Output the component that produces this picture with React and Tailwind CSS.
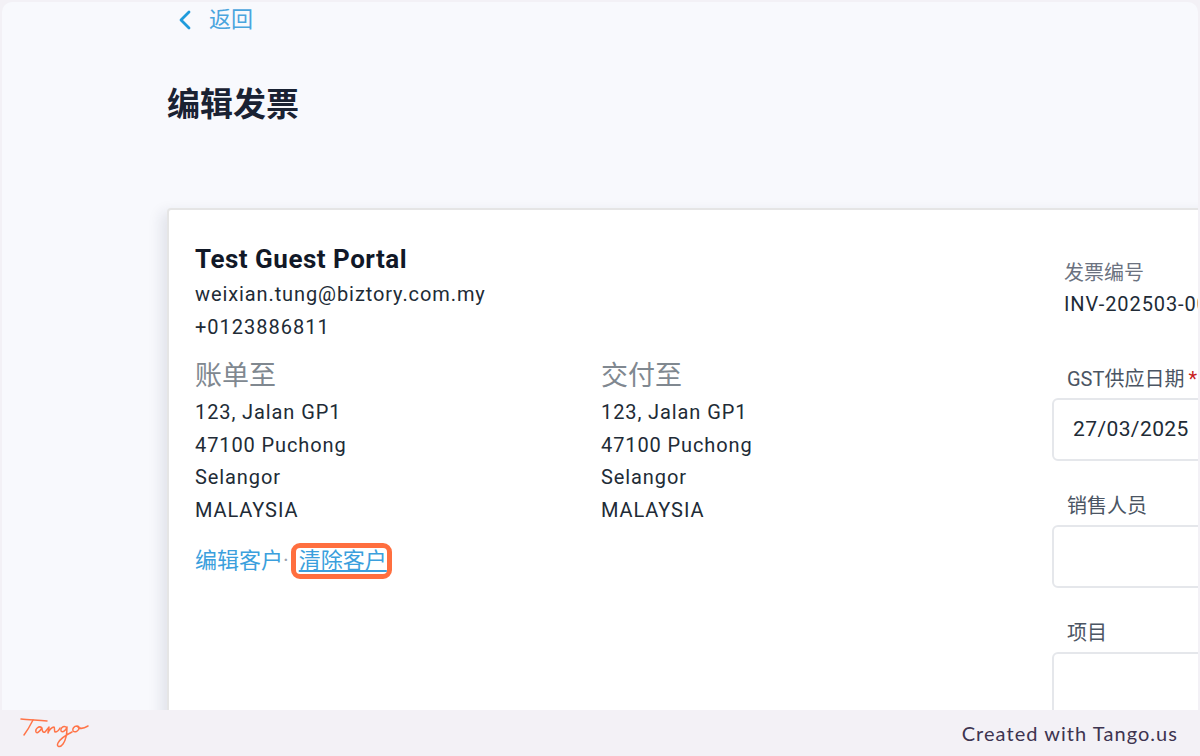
import React from "react";

const font = { fontFamily: "Roboto, 'Noto Sans CJK SC', sans-serif" };

const Address = ({ title }) => (
  <div className="w-[406px]">
    <div className="text-[27px] leading-[36px] text-[#808890]">{title}</div>
    <div className="mt-[2px] text-[20px] leading-[32.7px] tracking-[0.9px] text-[#212b36]">
      <div>123, Jalan GP1</div>
      <div>47100 Puchong</div>
      <div>Selangor</div>
      <div>MALAYSIA</div>
    </div>
  </div>
);

const Field = ({ label, required, value, className }) => (
  <div className={className}>
    <div className="pl-[15px] text-[20px] leading-[28px] text-[#4b5563] whitespace-nowrap">
      {label}
      {required && <span className="ml-[4px] text-[#c81e1e]">*</span>}
    </div>
    <div className="mt-[5px] flex h-[63px] w-[200px] items-center rounded-[6px] border-2 border-[#e5e7eb] bg-white pl-[19px] text-[21px] tracking-[0.4px] text-[#212b36]">
      {value}
    </div>
  </div>
);

const TangoLogo = () => (
  <svg width="70" height="34" viewBox="0 0 70 34" fill="none" stroke="#ff7448" strokeWidth="1.5" strokeLinecap="round" strokeLinejoin="round">
    <path d="M1 3 C8 4 16 4 27 5" />
    <path d="M13 4 C10 10 7 15 4 19" />
    <path d="M22 12 C19 9 15 13 16 16 C17 18 20 15 22 12 C22 15 23 17 25 16 C27 14 28 12 29 11 C29 13 28 15 28 17 C29 14 32 11 34 11 C35 12 34 15 35 16 C37 16 39 14 40 12" />
    <path d="M46 11 C43 9 40 13 41 15 C43 17 46 14 47 11 C47 16 46 24 43 28 C40 32 36 31 38 27 C40 23 46 19 52 16" />
    <path d="M57 10 C54 10 52 13 53 15 C55 17 59 15 59 12 C59 10 57 10 57 10 C59 13 63 13 68 10" />
  </svg>
);

export default function App() {
  return (
    <div className="flex h-[756px] w-[1200px] flex-col overflow-hidden bg-[#f3f1f6]" style={font}>
      <div className="flex-1 overflow-hidden pl-[2px] pt-[2px]">
        <div className="h-full w-[1196px] overflow-hidden rounded-tl-[10px] rounded-tr-[10px] bg-[#f8f9fd] pl-[165px]">
          <div className="flex h-[36px] items-center pl-[11px] text-[#2d9cdb]">
            <svg width="15" height="20" viewBox="0 0 15 20" fill="none" stroke="#1f9bdc" strokeWidth="2.8" strokeLinecap="round" strokeLinejoin="round">
              <path d="M11 2 L3 10 L11 18" />
            </svg>
            <span className="ml-[16px] text-[22px] leading-none text-[#4aa5de]">返回</span>
          </div>
          <h1 className="mt-[45px] text-[33px] font-bold leading-[44px] text-[#1a2233]">编辑发票</h1>
          <div className="mt-[81px] flex h-[600px] w-[1100px] rounded-[4px] border-2 border-[#e5e5e5] bg-white pl-[26px] shadow-[-6px_4px_14px_rgba(30,40,70,0.10)]">
            <div className="w-[857px] pt-[32px]">
              <div className="text-[26px] font-bold leading-[34px] tracking-[0.5px] text-[#111827]">Test Guest Portal</div>
              <div className="mt-[2px] text-[20px] leading-[33px] tracking-[0.9px] text-[#212b36]">weixian.tung@biztory.com.my</div>
              <div className="text-[20px] leading-[33px] tracking-[1px] text-[#212b36]">+0123886811</div>
              <div className="mt-[14px] flex">
                <Address title="账单至" />
                <Address title="交付至" />
              </div>
              <div className="mt-[16px] flex items-center text-[22px] leading-[26px] text-[#3b9fdd]">
                <span>编辑客户</span>
                <span className="mr-[2px] text-[#9ca3af]">·</span>
                <span className="rounded-[9px] border-[5px] border-[#ff6f3f] pl-[3px] underline">清除客户</span>
              </div>
            </div>
            <div className="pt-[49px]">
              <div className="pl-[12px] text-[20px] leading-[28px] text-[#6b7280]">发票编号</div>
              <div className="pl-[12px] text-[20px] leading-[34px] tracking-[0.9px] whitespace-nowrap text-[#212b36]">INV-202503-00</div>
              <Field className="mt-[44px]" label="GST供应日期" required value="27/03/2025" />
              <Field className="mt-[31px]" label="销售人员" />
              <Field className="mt-[31px]" label="项目" />
            </div>
          </div>
        </div>
      </div>
      <div className="flex h-[46px] shrink-0 items-center justify-between bg-[#f3f1f6] pl-[20px] pr-[22px]">
        <TangoLogo />
        <span className="text-[20px] tracking-[1.05px] text-[#3d3450]" style={{ fontFamily: "Lato, sans-serif" }}>Created with Tango.us</span>
      </div>
    </div>
  );
}
